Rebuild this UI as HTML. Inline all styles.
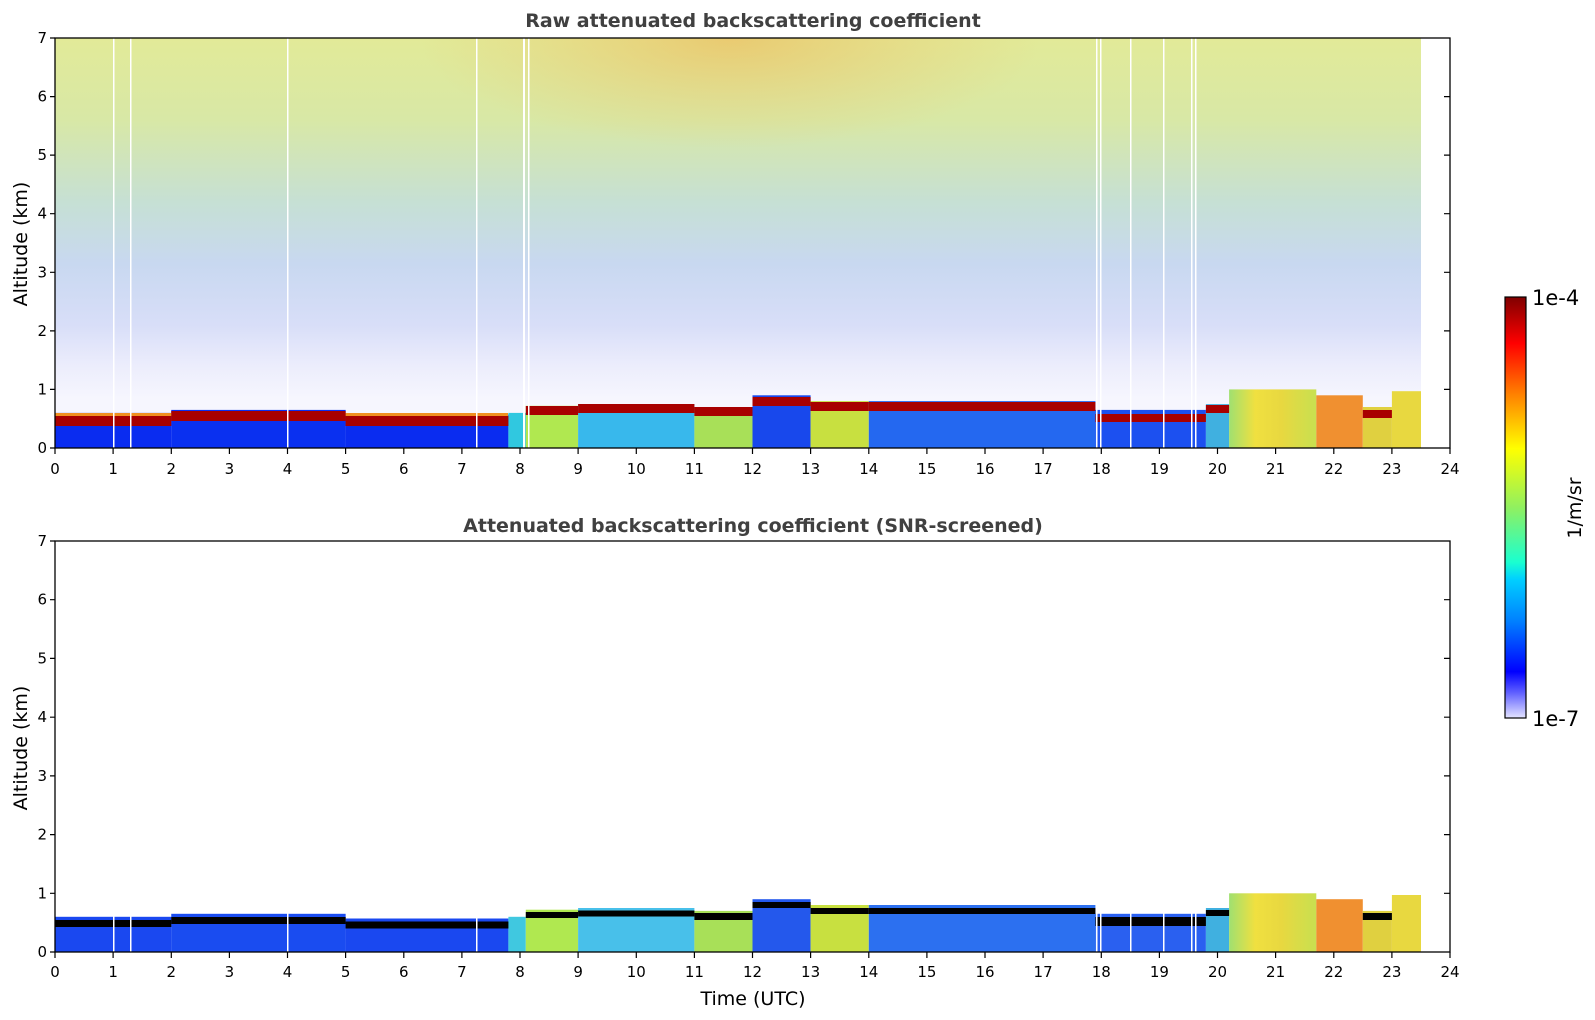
<!DOCTYPE html>
<html><head><meta charset="utf-8"><style>
html,body{margin:0;padding:0;background:#fff;}
svg{display:block;font-family:"DejaVu Sans","Liberation Sans",sans-serif;}
</style></head><body>
<svg width="1595" height="1020" viewBox="0 0 1595 1020" xmlns="http://www.w3.org/2000/svg">
<defs>
<linearGradient id="bg" x1="0" y1="0" x2="0" y2="1">
<stop offset="0" stop-color="#e2ea98"/>
<stop offset="0.2" stop-color="#d8e8a6"/>
<stop offset="0.4" stop-color="#c6e0d4"/>
<stop offset="0.55" stop-color="#c8d8f0"/>
<stop offset="0.7" stop-color="#d8def8"/>
<stop offset="0.8" stop-color="#ecedfc"/>
<stop offset="0.88" stop-color="#f6f6fe"/>
<stop offset="1" stop-color="#f6f6fe"/>
</linearGradient>
<radialGradient id="org" cx="0.5" cy="0" r="0.5">
<stop offset="0" stop-color="#f0b050" stop-opacity="0.55"/>
<stop offset="1" stop-color="#f0c060" stop-opacity="0"/>
</radialGradient>
<linearGradient id="cb" x1="0" y1="0" x2="0" y2="1">
<stop offset="0" stop-color="#800000"/>
<stop offset="0.11" stop-color="#ff0000"/>
<stop offset="0.23" stop-color="#ff8000"/>
<stop offset="0.36" stop-color="#ffff00"/>
<stop offset="0.5" stop-color="#90f060"/>
<stop offset="0.63" stop-color="#1affd0"/>
<stop offset="0.67" stop-color="#00d0ff"/>
<stop offset="0.77" stop-color="#0080ff"/>
<stop offset="0.89" stop-color="#0000ff"/>
<stop offset="0.94" stop-color="#6060ff"/>
<stop offset="1" stop-color="#e4e4ff"/>
</linearGradient>
<linearGradient id="yl" x1="0" y1="0" x2="1" y2="0">
<stop offset="0" stop-color="#a0e070"/>
<stop offset="0.3" stop-color="#f0e040"/>
<stop offset="0.6" stop-color="#e8d840"/>
<stop offset="1" stop-color="#c8e050"/>
</linearGradient>
</defs>

<text x="753" y="27" text-anchor="middle" font-size="19" font-weight="bold" fill="#404040">Raw attenuated backscattering coefficient</text>
<text x="753" y="532" text-anchor="middle" font-size="19" font-weight="bold" fill="#404040">Attenuated backscattering coefficient (SNR-screened)</text>

<!-- TOP PLOT -->
<rect x="55" y="38" width="1366" height="410" fill="url(#bg)"/>
<rect x="420" y="38" width="620" height="220" fill="url(#org)"/>
<g>
<rect x="55" y="412.9" width="116.3" height="35.1" fill="#0a2cf0"/>
<rect x="171.25" y="409.9" width="174.4" height="38.1" fill="#0a30f0"/>
<rect x="345.6" y="414.6" width="162.8" height="33.4" fill="#0a2cf0"/>
<rect x="508.4" y="412.9" width="17.4" height="35.1" fill="#30c8e0"/>
<rect x="525.8" y="405.8" width="52.3" height="42.2" fill="#b0e850"/>
<rect x="578.1" y="404.1" width="116.3" height="43.9" fill="#38b8ec"/>
<rect x="694.4" y="407" width="58.1" height="41" fill="#a8e058"/>
<rect x="752.5" y="395.3" width="58.1" height="52.7" fill="#1848ec"/>
<rect x="810.6" y="401.1" width="58.2" height="46.9" fill="#c8e040"/>
<rect x="868.8" y="401.1" width="226.6" height="46.9" fill="#2468f0"/>
<rect x="1095.4" y="409.9" width="110.5" height="38.1" fill="#1c50f0"/>
<rect x="1205.9" y="404.1" width="23.2" height="43.9" fill="#40b0e0"/>
<rect x="1229.1" y="389.4" width="87.2" height="58.6" fill="url(#yl)"/>
<rect x="1316.3" y="395.3" width="46.5" height="52.7" fill="#f09030"/>
<rect x="1362.8" y="407" width="29.1" height="41" fill="#e0d040"/>
<rect x="1391.9" y="391.2" width="29.1" height="56.8" fill="#e8d840"/>
</g>
<g fill="#a80000">
<rect x="55" y="413" width="453" height="3" fill="#f09020"/>
<rect x="55" y="416" width="116.3" height="10"/>
<rect x="171.25" y="411" width="174.4" height="10"/>
<rect x="345.6" y="416" width="162.8" height="10"/>
<rect x="525.8" y="406" width="52.3" height="9"/>
<rect x="578.1" y="404" width="116.3" height="9"/>
<rect x="694.4" y="407" width="58.1" height="9"/>
<rect x="752.5" y="397" width="58.1" height="9"/>
<rect x="810.6" y="402" width="58.2" height="9"/>
<rect x="868.8" y="402" width="226.6" height="9"/>
<rect x="1095.4" y="414" width="110.5" height="8"/>
<rect x="1205.9" y="405" width="23.2" height="8"/>
<rect x="1362.8" y="410" width="29.1" height="8"/>
</g>
<g fill="#ffffff">
<rect x="113" y="38" width="1.5" height="410"/>
<rect x="130" y="38" width="1.5" height="410"/>
<rect x="287" y="38" width="1.5" height="410"/>
<rect x="476" y="38" width="1.5" height="410"/>
<rect x="523" y="38" width="2" height="410"/>
<rect x="528" y="38" width="1.5" height="410"/>
<rect x="1096" y="38" width="1.5" height="410"/>
<rect x="1100" y="38" width="1.5" height="410"/>
<rect x="1130" y="38" width="1.5" height="410"/>
<rect x="1163" y="38" width="1.5" height="410"/>
<rect x="1191" y="38" width="1.5" height="410"/>
<rect x="1195" y="38" width="1.5" height="410"/>
<rect x="1421" y="38" width="29" height="410"/>
</g>
<rect x="55" y="38" width="1395" height="410" fill="none" stroke="#000" stroke-width="1.3"/>

<!-- BOTTOM PLOT -->
<g>
<rect x="55" y="916.8" width="116.3" height="35.2" fill="#1a48f0"/>
<rect x="171.25" y="913.8" width="174.4" height="38.2" fill="#1a4cf0"/>
<rect x="345.6" y="918.5" width="162.8" height="33.5" fill="#1a48f0"/>
<rect x="508.4" y="916.8" width="17.4" height="35.2" fill="#40c8e0"/>
<rect x="525.8" y="909.7" width="52.3" height="42.3" fill="#b0e850"/>
<rect x="578.1" y="908" width="116.3" height="44" fill="#48c0ea"/>
<rect x="694.4" y="910.9" width="58.1" height="41.1" fill="#a8e058"/>
<rect x="752.5" y="899.2" width="58.1" height="52.8" fill="#2458ec"/>
<rect x="810.6" y="905" width="58.2" height="47" fill="#c8e040"/>
<rect x="868.8" y="905" width="226.6" height="47" fill="#2c70f0"/>
<rect x="1095.4" y="913.8" width="110.5" height="38.2" fill="#2a60f0"/>
<rect x="1205.9" y="908" width="23.2" height="44" fill="#40b0e0"/>
<rect x="1229.1" y="893.3" width="87.2" height="58.7" fill="url(#yl)"/>
<rect x="1316.3" y="899.2" width="46.5" height="52.8" fill="#f09030"/>
<rect x="1362.8" y="910.9" width="29.1" height="41.1" fill="#e0d040"/>
<rect x="1391.9" y="895" width="29.1" height="57" fill="#e8d840"/>
</g>
<g fill="#000">
<rect x="55" y="920" width="116.3" height="7"/>
<rect x="171.25" y="917" width="174.4" height="7"/>
<rect x="345.6" y="921.5" width="162.8" height="7"/>
<rect x="525.8" y="912" width="52.3" height="6"/>
<rect x="578.1" y="910.5" width="116.3" height="6"/>
<rect x="694.4" y="913" width="58.1" height="7"/>
<rect x="752.5" y="902" width="58.1" height="6"/>
<rect x="810.6" y="908" width="58.2" height="6"/>
<rect x="868.8" y="908" width="226.6" height="6"/>
<rect x="1095.4" y="917" width="110.5" height="9"/>
<rect x="1205.9" y="910" width="23.2" height="6"/>
<rect x="1362.8" y="913" width="29.1" height="7"/>
</g>
<g fill="#ffffff">
<rect x="113" y="900" width="1.5" height="52"/>
<rect x="130" y="900" width="1.5" height="52"/>
<rect x="287" y="900" width="1.5" height="52"/>
<rect x="476" y="900" width="1.5" height="52"/>
<rect x="1096" y="880" width="1.5" height="72"/>
<rect x="1100" y="880" width="1.5" height="72"/>
<rect x="1130" y="880" width="1.5" height="72"/>
<rect x="1163" y="880" width="1.5" height="72"/>
<rect x="1191" y="880" width="1.5" height="72"/>
<rect x="1195" y="880" width="1.5" height="72"/>
</g>
<rect x="55" y="541" width="1395" height="411" fill="none" stroke="#000" stroke-width="1.3"/>

<g stroke="#000" stroke-width="1.2">
<path d="M55 448v6M113.1 448v6M171.3 448v6M229.4 448v6M287.5 448v6M345.6 448v6M403.8 448v6M461.9 448v6M520 448v6M578.1 448v6M636.3 448v6M694.4 448v6M752.5 448v6M810.6 448v6M868.8 448v6M926.9 448v6M985 448v6M1043.1 448v6M1101.3 448v6M1159.4 448v6M1217.5 448v6M1275.6 448v6M1333.8 448v6M1391.9 448v6M1450 448v6"/>
<path d="M55 952v6M113.1 952v6M171.3 952v6M229.4 952v6M287.5 952v6M345.6 952v6M403.8 952v6M461.9 952v6M520 952v6M578.1 952v6M636.3 952v6M694.4 952v6M752.5 952v6M810.6 952v6M868.8 952v6M926.9 952v6M985 952v6M1043.1 952v6M1101.3 952v6M1159.4 952v6M1217.5 952v6M1275.6 952v6M1333.8 952v6M1391.9 952v6M1450 952v6"/>
<path d="M50 448h5M50 389.4h5M50 330.9h5M50 272.3h5M50 213.7h5M50 155.1h5M50 96.6h5M50 38h5M1444 389.4h6M1444 330.9h6M1444 272.3h6M1444 213.7h6M1444 155.1h6M1444 96.6h6"/>
<path d="M50 952h5M50 893.3h5M50 834.6h5M50 775.9h5M50 717.2h5M50 658.4h5M50 599.7h5M50 541h5M1444 893.3h6M1444 834.6h6M1444 775.9h6M1444 717.2h6M1444 658.4h6M1444 599.7h6"/>
</g>

<g font-size="15" fill="#000" text-anchor="middle">
<text x="55" y="474">0</text><text x="113.1" y="474">1</text><text x="171.3" y="474">2</text><text x="229.4" y="474">3</text><text x="287.5" y="474">4</text><text x="345.6" y="474">5</text><text x="403.8" y="474">6</text><text x="461.9" y="474">7</text><text x="520" y="474">8</text><text x="578.1" y="474">9</text><text x="636.3" y="474">10</text><text x="694.4" y="474">11</text><text x="752.5" y="474">12</text><text x="810.6" y="474">13</text><text x="868.8" y="474">14</text><text x="926.9" y="474">15</text><text x="985" y="474">16</text><text x="1043.1" y="474">17</text><text x="1101.3" y="474">18</text><text x="1159.4" y="474">19</text><text x="1217.5" y="474">20</text><text x="1275.6" y="474">21</text><text x="1333.8" y="474">22</text><text x="1391.9" y="474">23</text><text x="1450" y="474">24</text>
<text x="55" y="977">0</text><text x="113.1" y="977">1</text><text x="171.3" y="977">2</text><text x="229.4" y="977">3</text><text x="287.5" y="977">4</text><text x="345.6" y="977">5</text><text x="403.8" y="977">6</text><text x="461.9" y="977">7</text><text x="520" y="977">8</text><text x="578.1" y="977">9</text><text x="636.3" y="977">10</text><text x="694.4" y="977">11</text><text x="752.5" y="977">12</text><text x="810.6" y="977">13</text><text x="868.8" y="977">14</text><text x="926.9" y="977">15</text><text x="985" y="977">16</text><text x="1043.1" y="977">17</text><text x="1101.3" y="977">18</text><text x="1159.4" y="977">19</text><text x="1217.5" y="977">20</text><text x="1275.6" y="977">21</text><text x="1333.8" y="977">22</text><text x="1391.9" y="977">23</text><text x="1450" y="977">24</text>
</g>
<g font-size="15" fill="#000" text-anchor="end">
<text x="47" y="453">0</text><text x="47" y="394.4">1</text><text x="47" y="335.9">2</text><text x="47" y="277.3">3</text><text x="47" y="218.7">4</text><text x="47" y="160.1">5</text><text x="47" y="101.6">6</text><text x="47" y="43">7</text>
<text x="47" y="957">0</text><text x="47" y="898.3">1</text><text x="47" y="839.6">2</text><text x="47" y="780.9">3</text><text x="47" y="722.2">4</text><text x="47" y="663.4">5</text><text x="47" y="604.7">6</text><text x="47" y="546">7</text>
</g>
<text transform="translate(27,244) rotate(-90)" text-anchor="middle" font-size="19" fill="#000">Altitude (km)</text>
<text transform="translate(27,748) rotate(-90)" text-anchor="middle" font-size="19" fill="#000">Altitude (km)</text>
<text x="753" y="1005" text-anchor="middle" font-size="19" fill="#000">Time (UTC)</text>

<rect x="1505" y="297" width="21" height="421" fill="url(#cb)" stroke="#000" stroke-width="1.2"/>
<text x="1532" y="305" font-size="21" fill="#000">1e-4</text>
<text x="1532" y="726" font-size="21" fill="#000">1e-7</text>
<text transform="translate(1581,508) rotate(-90)" text-anchor="middle" font-size="19" fill="#000">1/m/sr</text>
</svg>
</body></html>
